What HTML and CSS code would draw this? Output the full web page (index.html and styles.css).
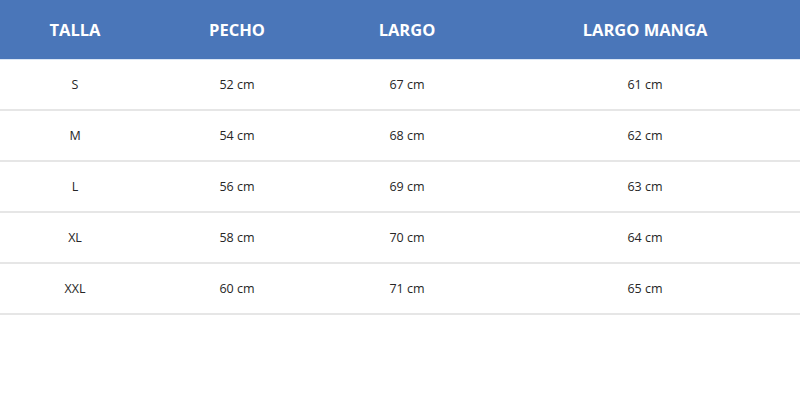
FILE: index.html
```html
<!DOCTYPE html>
<html lang="es">
<head>
<meta charset="utf-8">
<link rel="stylesheet" href="styles.css">
</head>
<body>
<div class="table">
  <div class="row head">
    <div class="c">TALLA</div><div class="c">PECHO</div><div class="c">LARGO</div><div class="c">LARGO MANGA</div>
  </div>
  <div class="row"><div class="c">S</div><div class="c">52 cm</div><div class="c">67 cm</div><div class="c">61 cm</div></div>
  <div class="row"><div class="c">M</div><div class="c">54 cm</div><div class="c">68 cm</div><div class="c">62 cm</div></div>
  <div class="row"><div class="c">L</div><div class="c">56 cm</div><div class="c">69 cm</div><div class="c">63 cm</div></div>
  <div class="row"><div class="c">XL</div><div class="c">58 cm</div><div class="c">70 cm</div><div class="c">64 cm</div></div>
  <div class="row"><div class="c">XXL</div><div class="c">60 cm</div><div class="c">71 cm</div><div class="c">65 cm</div></div>
</div>
</body>
</html>
```
FILE: styles.css
```css
html, body { margin: 0; padding: 0; background: #fff; }
body { font-family: "Open Sans", "DejaVu Sans", sans-serif; }
.table { width: 800px; }
.row {
  display: grid;
  grid-template-columns: 150px 174px 166px 310px;
  height: 49px;
  align-items: center;
  border-bottom: 2px solid #e6e6e6;
  color: #262626;
  font-size: 12.5px;
}
.row.head {
  height: 59px;
  background: #4a76b9;
  color: #fff;
  font-size: 16.5px;
  font-weight: 700;
  border-bottom: 1px solid #dbe6f5;
}
.c { text-align: center; }
```
